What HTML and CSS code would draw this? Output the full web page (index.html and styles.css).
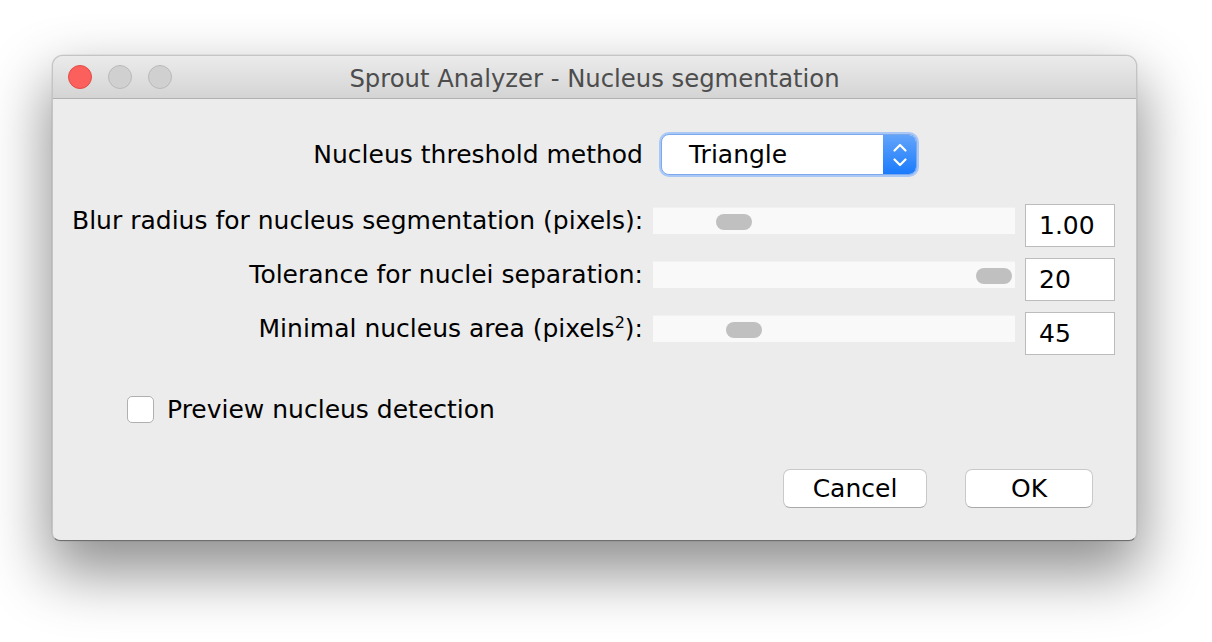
FILE: index.html
```html
<!DOCTYPE html>
<html>
<head>
<meta charset="utf-8">
<title>Sprout Analyzer - Nucleus segmentation</title>
<link rel="stylesheet" href="styles.css">
</head>
<body>
<div class="desktop">
  <div class="window">
    <div class="titlebar">
      <div class="lights">
        <span class="light close"></span>
        <span class="light"></span>
        <span class="light"></span>
      </div>
      <div class="title">Sprout Analyzer - Nucleus segmentation</div>
      <div class="spacer"></div>
    </div>
    <div class="content">
      <div class="params">
        <div class="label method-label">Nucleus threshold method</div>
        <div class="select">
          <span class="select-value">Triangle</span>
          <span class="select-arrows">
            <svg width="16" height="26" viewBox="0 0 16 26">
              <path d="M2.5 8.5 L8 3 L13.5 8.5" fill="none" stroke="#fff" stroke-width="2.2" stroke-linecap="round" stroke-linejoin="round"/>
              <path d="M2.5 17.5 L8 23 L13.5 17.5" fill="none" stroke="#fff" stroke-width="2.2" stroke-linecap="round" stroke-linejoin="round"/>
            </svg>
          </span>
        </div>
        <div class="spacer"></div>

        <div class="label">Blur radius for nucleus segmentation (pixels):</div>
        <div class="slider"><span class="thumb" style="margin-left: 63px"></span></div>
        <div class="field">1.00</div>

        <div class="label">Tolerance for nuclei separation:</div>
        <div class="slider"><span class="thumb" style="margin-left: 323px"></span></div>
        <div class="field">20</div>

        <div class="label">Minimal nucleus area (pixels<sup>2</sup>):</div>
        <div class="slider"><span class="thumb" style="margin-left: 73px"></span></div>
        <div class="field">45</div>
      </div>

      <label class="check-row">
        <span class="checkbox"></span>
        <span class="check-text">Preview nucleus detection</span>
      </label>

      <div class="buttons">
        <button class="btn btn-cancel">Cancel</button>
        <button class="btn btn-ok">OK</button>
      </div>
    </div>
  </div>
</div>
</body>
</html>
```

FILE: styles.css
```css
* { box-sizing: border-box; }

html, body {
  margin: 0;
  padding: 0;
  background: #ffffff;
  width: 1212px;
  height: 642px;
  overflow: hidden;
}

body {
  font-family: "DejaVu Sans", "Liberation Sans", sans-serif;
  font-size: 25px;
  color: #000;
}

.desktop {
  padding: 55px 0 0 52px;
}

.window {
  width: 1085px;
  background: #ececec;
  border: 1px solid #c4c4c4;
  border-bottom-color: #6e6e6e;
  border-radius: 11px 11px 8px 8px;
  box-shadow: 0 28px 60px 4px rgba(0, 0, 0, 0.44), 0 0 0 0.5px rgba(0,0,0,0.1);
  overflow: hidden;
}

.titlebar {
  height: 43px;
  display: grid;
  grid-template-columns: 1fr auto 1fr;
  align-items: center;
  background: linear-gradient(to bottom, #ebebeb, #d4d4d4);
  border-bottom: 1px solid #b1b1b1;
}

.lights {
  display: flex;
  gap: 16px;
  padding-left: 15px;
}

.light {
  width: 24px;
  height: 24px;
  border-radius: 50%;
  background: #d0d0d0;
  border: 1px solid #b9b9b9;
}

.light.close {
  background: #fc605c;
  border-color: #de4c47;
}

.title {
  font-size: 24.3px;
  color: #4d4d4d;
  white-space: nowrap;
  padding-top: 2px;
}

.content {
  padding: 35px 20px 32px 19px;
  display: flex;
  flex-direction: column;
}

.params {
  display: grid;
  grid-template-columns: 571px 362px 90px;
  column-gap: 10px;
  row-gap: 11px;
  align-items: start;
}

.label {
  text-align: right;
  line-height: 27px;
  margin-top: 3px;
  white-space: nowrap;
}

.label sup {
  font-size: 16px;
  line-height: 0;
  vertical-align: 9px;
}

.method-label {
  line-height: 41px;
  margin-top: 0;
}

.select {
  margin-left: 8px;
  width: 256px;
  height: 41px;
  display: flex;
  background: #fff;
  border: 1px solid #7ea8ec;
  border-radius: 8px;
  box-shadow: 0 0 0 2px #aac8f5;
  overflow: hidden;
  margin-bottom: 18px;
}

.select-value {
  flex: 1;
  padding-left: 27px;
  line-height: 39px;
}

.select-arrows {
  width: 33px;
  display: flex;
  align-items: center;
  justify-content: center;
  background: linear-gradient(to bottom, #63a4fa, #1a7bfd);
}

.slider {
  margin-top: 3px;
  height: 27px;
  background: #f9f9f9;
  border-top: 1px solid #f1f1f1;
  display: flex;
  align-items: flex-start;
}

.thumb {
  margin-top: 6px;
  width: 36px;
  height: 16px;
  border-radius: 8px;
  background: #c0c0c0;
}

.field {
  height: 43px;
  background: #fff;
  border: 1px solid #bcbcbc;
  padding-left: 13px;
  line-height: 41px;
}

.check-row {
  margin-top: 40px;
  margin-left: 55px;
  display: flex;
  align-items: center;
  gap: 13px;
}

.checkbox {
  width: 27px;
  height: 27px;
  background: #fff;
  border: 1px solid #b0b0b0;
  border-radius: 5px;
}

.buttons {
  margin-top: 45px;
  display: flex;
  justify-content: flex-end;
  gap: 38px;
  padding-right: 23px;
}

.btn {
  font-family: inherit;
  font-size: 25px;
  color: #000;
  height: 39px;
  background: #fff;
  border: 1px solid #c9c9c9;
  border-bottom-color: #a9a9a9;
  border-radius: 7px;
  padding: 0;
}

.btn-cancel { width: 144px; }
.btn-ok { width: 128px; }
```
